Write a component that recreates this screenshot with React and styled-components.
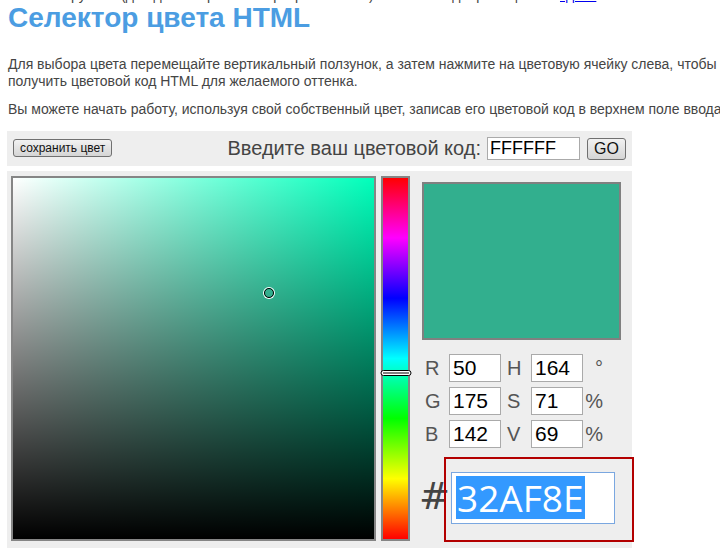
import React from 'react';
import styled, {createGlobalStyle} from "styled-components";

const hue = 164;
const rgb = {r: 50, g: 175, b: 142};
const hsv = {h: 164, s: 71, v: 69};
const hex = "32AF8E";

function App() {
    return (
        <Page>
            <GlobalStyle/>
            <Crumb>Этот инструмент (для дизайнеров и веб-разработчиков) поможет подобрать цвет — <a href="#">здесь</a></Crumb>
            <Title>Селектор цвета HTML</Title>
            <Text>
                Для выбора цвета перемещайте вертикальный ползунок, а затем нажмите на цветовую ячейку слева, чтобы
                получить цветовой код HTML для желаемого оттенка.
            </Text>
            <Text>Вы можете начать работу, используя свой собственный цвет, записав его цветовой код в верхнем поле ввода.</Text>

            <Toolbar>
                <SmallButton>сохранить цвет</SmallButton>
                <CodeForm>
                    <CodeLabel>Введите ваш цветовой код:</CodeLabel>
                    <CodeInput defaultValue="FFFFFF"/>
                    <GoButton>GO</GoButton>
                </CodeForm>
            </Toolbar>

            <Picker>
                <SatVal hue={hue}>
                    <Cursor style={{left: 251, top: 110}}/>
                </SatVal>
                <HueBar>
                    <HueThumb style={{top: 192}} width="32" height="6" viewBox="0 0 32 6">
                        <rect x="1" y="0.5" width="30" height="5" rx="2.5" fill="#fff" stroke="#000"/>
                        <line x1="3" y1="3" x2="29" y2="3" stroke="#000"/>
                    </HueThumb>
                </HueBar>
                <Side>
                    <Swatch color={`#${hex}`}/>
                    <Values>
                        <Label>R</Label><Field defaultValue={rgb.r}/>
                        <Label>H</Label><Field defaultValue={hsv.h}/>
                        <Unit>°</Unit>
                        <Label>G</Label><Field defaultValue={rgb.g}/>
                        <Label>S</Label><Field defaultValue={hsv.s}/>
                        <Unit>%</Unit>
                        <Label>B</Label><Field defaultValue={rgb.b}/>
                        <Label>V</Label><Field defaultValue={hsv.v}/>
                        <Unit>%</Unit>
                    </Values>
                    <HexRow>
                        <Hash>#</Hash>
                        <HexFrame>
                            <HexField><Selected>{hex}</Selected></HexField>
                        </HexFrame>
                    </HexRow>
                </Side>
            </Picker>
        </Page>
    )
}

export default App

const GlobalStyle = createGlobalStyle`
    html, body {
        margin : 0;
        background : #fff;
        overflow : hidden;
    }
    body {
        font-family : "Liberation Sans", Arial, sans-serif;
        color : #444;
    }
`
const Page = styled.div`
    padding : 0 0 0 7px;
    width : 713px;
    height : 548px;
    overflow : hidden;
`
const Crumb = styled.div`
    margin : -13px 0 0 1px;
    font-size : 14px;
    line-height : 16px;
    white-space : nowrap;
    color : #444;
    & a {
        color : #0000ee;
    }
`
const Title = styled.h1`
    margin : -1px 0 0 1px;
    font-size : 28px;
    line-height : 32px;
    font-weight : 700;
    color : #4b9de2;
`
const Text = styled.p`
    margin : 22px 0 0 1px;
    font-size : 14px;
    line-height : 17px;
    white-space : normal;
    width : 760px;
    color : #454545;
    & + & {
        margin-top : 11px;
    }
`
const Toolbar = styled.div`
    margin-top : 13px;
    width : 625px;
    height : 35px;
    box-sizing : border-box;
    padding : 0 6px 0 6px;
    display : flex;
    align-items : center;
    justify-content : space-between;
    background : #eeeeee;
`
const SmallButton = styled.button`
    height : 18px;
    padding : 0 6px;
    font-family : "Liberation Sans", Arial, sans-serif;
    font-size : 12px;
    color : #111;
    border : 1px solid #707070;
    border-radius : 3px;
    background : linear-gradient(#f2f2f2, #e3e3e3 50%, #d5d5d5);
    margin-top : -2px;
`
const CodeForm = styled.div`
    display : flex;
    align-items : center;
`
const CodeLabel = styled.span`
    font-size : 20px;
    color : #444;
    margin-right : 6px;
`
const CodeInput = styled.input`
    width : 93px;
    height : 23px;
    box-sizing : border-box;
    border : 1px solid #aaa;
    padding : 0 2px;
    font-family : "Liberation Sans", Arial, sans-serif;
    font-size : 18px;
    color : #000;
    background : #fff;
`
const GoButton = styled.button`
    margin-left : 7px;
    width : 39px;
    height : 22px;
    padding : 0;
    font-family : "Liberation Sans", Arial, sans-serif;
    font-size : 16px;
    color : #111;
    border : 1px solid #707070;
    border-radius : 3px;
    background : linear-gradient(#f2f2f2, #e3e3e3 50%, #d5d5d5);
`
const Picker = styled.div`
    margin-top : 5px;
    width : 625px;
    height : 400px;
    box-sizing : border-box;
    padding : 5px 0 0 4px;
    display : flex;
    align-items : flex-start;
    background : #eeeeee;
    & > * {
        flex-shrink : 0;
    }
`
const SatVal = styled.div`
    position : relative;
    width : 361px;
    height : 361px;
    border : 2px solid #858585;
    background :
        linear-gradient(to bottom, rgba(0,0,0,0), #000),
        linear-gradient(to right, #fff, rgba(255,255,255,0)),
        hsl(${props => props.hue}, 100%, 50%);
`
const Cursor = styled.div`
    position : absolute;
    width : 8px;
    height : 8px;
    border : 1px solid #000;
    border-radius : 50%;
    box-shadow : 0 0 0 1px #fff;
`
const HueBar = styled.div`
    position : relative;
    margin-left : 5px;
    width : 25px;
    height : 361px;
    border : 2px solid #858585;
    background : linear-gradient(to bottom,
        #ff0000 0%, #ff00ff 16.6%, #0000ff 33.3%, #00ffff 50%,
        #00ff00 66.6%, #ffff00 83.3%, #ff0000 100%);
`
const HueThumb = styled.svg`
    position : absolute;
    left : -3px;
    display : block;
`
const Side = styled.div`
    margin-left : 12px;
    width : 212px;
    padding-top : 6px;
`
const Swatch = styled.div`
    width : 195px;
    height : 154px;
    border : 2px solid #808080;
    background : ${props => props.color};
`
const Values = styled.div`
    margin-top : 14px;
    display : grid;
    grid-template-columns : 27px 52px 30px 52px 20px;
    grid-auto-rows : 28px;
    row-gap : 5px;
    align-items : center;
`
const Label = styled.span`
    padding-left : 3px;
    font-size : 20px;
    color : #555;
    & + input + & {
        padding-left : 6px;
    }
`
const Field = styled.input`
    width : 52px;
    height : 28px;
    box-sizing : border-box;
    border : 1px solid #aaa;
    padding : 0 3px;
    font-family : "Liberation Sans", Arial, sans-serif;
    font-size : 21px;
    color : #000;
    background : #fff;
`
const Unit = styled.span`
    justify-self : end;
    font-size : 20px;
    color : #555;
`
const HexRow = styled.div`
    margin-top : 9px;
    display : flex;
    align-items : center;
`
const Hash = styled.span`
    width : 25px;
    margin-left : -3px;
    font-family : "DejaVu Sans", sans-serif;
    font-size : 37px;
    color : #444;
    margin-top : -6px;
`
const HexFrame = styled.div`
    box-sizing : border-box;
    width : 190px;
    height : 85px;
    border : 2px solid #b30000;
    padding-left : 5px;
    padding-top : 13px;
`
const HexField = styled.div`
    width : 164px;
    height : 52px;
    box-sizing : border-box;
    border : 1px solid #7aa7e0;
    background : #fff;
    padding : 3px 0 0 4px;
`
const Selected = styled.span`
    display : inline-block;
    height : 43px;
    line-height : 43px;
    padding : 0 1px;
    font-family : "Open Sans", sans-serif;
    font-size : 37px;
    color : #fff;
    background : #3399ff;
`
